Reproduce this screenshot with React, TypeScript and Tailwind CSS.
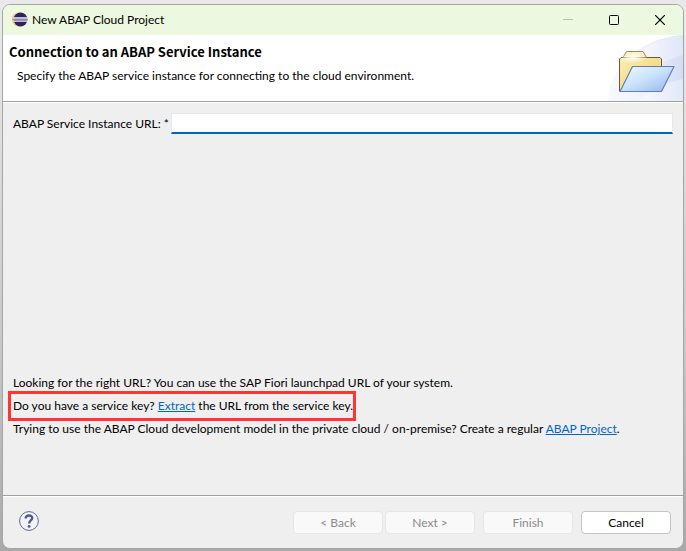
import React from 'react';

function EclipseIcon() {
  return (
    <svg className="w-4 h-4" viewBox="0 0 16 16" aria-hidden="true">
      <circle cx="7.2" cy="7.5" r="7" fill="#f39a2d" />
      <circle cx="8.1" cy="7.5" r="7" fill="#f6f4ee" />
      <circle cx="8.5" cy="7.5" r="6.9" fill="#2f2457" />
      <path d="M1.2 6H15.4" stroke="#f4f2fa" strokeWidth="1.3" />
      <path d="M1.2 7.6H15.4" stroke="#8f88b4" strokeWidth="1.2" />
      <path d="M1.4 9.2H15.2" stroke="#f4f2fa" strokeWidth="1.3" />
    </svg>
  );
}

function FolderBanner() {
  return (
    <svg className="w-[75px] h-[66px] shrink-0" viewBox="0 0 75 66" aria-hidden="true">
      <defs>
        <linearGradient id="glow" x1="0" y1="0" x2="1" y2="0">
          <stop offset="0" stopColor="#f8f9fe" />
          <stop offset=".5" stopColor="#eff2fb" />
          <stop offset="1" stopColor="#d3dcf5" />
        </linearGradient>
        <linearGradient id="back" x1="0" y1="0" x2="1" y2="1">
          <stop offset="0" stopColor="#fbeeb0" />
          <stop offset="1" stopColor="#edcf6c" />
        </linearGradient>
        <linearGradient id="front" x1="0" y1="0" x2="1" y2="1">
          <stop offset="0" stopColor="#f2fbff" />
          <stop offset=".5" stopColor="#c8e1fa" />
          <stop offset="1" stopColor="#8fb4ec" />
        </linearGradient>
        <radialGradient id="shine">
          <stop offset="0" stopColor="#fff" />
          <stop offset="1" stopColor="#fff" stopOpacity="0" />
        </radialGradient>
      </defs>
      <path d="M0 66C1 34 28 4 75 0V66Z" fill="url(#glow)" />
      <path d="M36 14C48 6 60 2 75 0V20C62 24 52 28 46 34Z" fill="#fff" opacity=".3" />
      <path d="M30 66C44 54 58 47 75 44V66Z" fill="#fff" opacity=".35" />
      <path d="M11.5 56V24L13 22.5H52L53.5 24V56Z" fill="url(#back)" stroke="#6f5540" strokeLinejoin="round" />
      <path d="M15 22.5L18.5 16.5H35L38.5 22.5Z" fill="#fbf1c2" stroke="#a3855a" strokeLinejoin="round" />
      <ellipse cx="25" cy="23" rx="13" ry="5" fill="url(#shine)" />
      <path d="M12 56.5L24.5 31.5H66L53.5 56.5Z" fill="url(#front)" stroke="#6678c6" strokeWidth="1.2" strokeLinejoin="round" />
    </svg>
  );
}

function TitleBar() {
  return (
    <header className="h-[30px] flex items-center pl-[9px] bg-[#edf8e0]">
      <EclipseIcon />
      <span className="ml-1 flex-1">New ABAP Cloud Project</span>
      <button type="button" aria-label="Minimize" disabled className="w-[46px] h-full flex items-center justify-center">
        <svg className="w-[10px] h-[10px]" viewBox="0 0 10 10"><path d="M0 4.5H10" stroke="#b9c2b0" /></svg>
      </button>
      <button type="button" aria-label="Maximize" className="w-[46px] h-full flex items-center justify-center">
        <svg className="w-[10px] h-[10px]" viewBox="0 0 10 10"><rect x=".5" y=".5" width="9" height="9" rx="1" fill="none" stroke="#000" /></svg>
      </button>
      <button type="button" aria-label="Close" className="w-[46px] h-full flex items-center justify-center">
        <svg className="w-[10px] h-[10px]" viewBox="0 0 10 10"><path d="M0 0L10 10M10 0L0 10" stroke="#000" strokeWidth="1.2" /></svg>
      </button>
    </header>
  );
}

const buttonStyle =
  'w-[90px] h-[23px] rounded border border-[#e6e6e6] bg-[#f9f9f9] text-[#8a8a8a] flex items-center justify-center';

export default function App() {
  return (
    <div className="min-h-screen flex flex-col pt-1 pl-[2px] pr-[2px] pb-[2px] bg-linear-to-b from-[#e9e9e9] from-5% via-[#c9c9c9] via-60% to-[#a9a9a9] font-['Lato','Noto_Sans',sans-serif] text-[12px] leading-4 text-black">
      <main className="flex-1 flex flex-col rounded-lg overflow-hidden border border-[#a6a6a6] bg-[#efefef]">
        <TitleBar />

        <section className="flex justify-between bg-white border-b border-[#a0a0a0]">
          <div className="pl-[6px] pt-[9px]">
            <h1 className="font-['Noto_Sans_CJK_SC','Noto_Sans',sans-serif] text-[13px] font-bold">Connection to an ABAP Service Instance</h1>
            <p className="pl-2 pt-2">Specify the ABAP service instance for connecting to the cloud environment.</p>
          </div>
          <FolderBanner />
        </section>

        <section className="flex-1 flex flex-col justify-between border-t border-white pt-[10px] pb-[58px] pl-[10px] pr-[10px]">
          <div className="flex items-center gap-[2px]">
            <label htmlFor="url">ABAP Service Instance URL: *</label>
            <input id="url" className="flex-1 h-[21px] px-1 bg-white border border-[#e3e8ef] border-b-2 border-b-[#0067c0] outline-none" />
          </div>

          <div>
            <p>Looking for the right URL? You can use the SAP Fiori launchpad URL of your system.</p>
            <p className="w-fit -ml-[5px] border-3 border-[#ff3434] pl-[2px] py-1">
              Do you have a service key? <a href="#extract" className="text-[#0066cc] underline">Extract</a> the URL from the service key.
            </p>
            <p>
              Trying to use the ABAP Cloud development model in the private cloud / on-premise? Create a regular{' '}
              <a href="#project" className="text-[#0066cc] underline">ABAP Project</a>.
            </p>
          </div>
        </section>

        <div className="border-t border-[#a0a0a0]">
          <footer className="h-[52px] flex items-center border-t border-white pl-[16px] pr-3">
            <button type="button" aria-label="Help" className="mr-auto pb-1">
              <svg className="w-5 h-5" viewBox="0 0 20 20">
                <circle cx="10" cy="10" r="9.4" fill="#f3f3f5" stroke="#5c6a90" />
                <path d="M6.6 7.4C6.6 3.4 13.4 3.6 13.2 7.2C13 9.4 10.2 9.6 10.2 12.4" fill="none" stroke="#4d5b86" strokeWidth="2.4" />
                <circle cx="10.1" cy="15.4" r="1.4" fill="#4d5b86" />
              </svg>
            </button>
            <button type="button" disabled className={buttonStyle}>&lt; Back</button>
            <button type="button" disabled className={`${buttonStyle} ml-[2px]`}>Next &gt;</button>
            <button type="button" disabled className={`${buttonStyle} ml-2`}>Finish</button>
            <button type="button" className="w-[90px] h-[23px] ml-2 rounded border border-[#c4c4c4] bg-white flex items-center justify-center">Cancel</button>
          </footer>
        </div>
      </main>
    </div>
  );
}
